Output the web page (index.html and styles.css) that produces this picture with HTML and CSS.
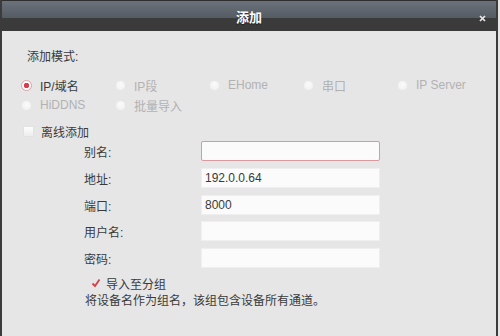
FILE: index.html
```html
<!DOCTYPE html>
<html>
  <head>
    <link rel="stylesheet" href="styles.css">
  </head>
  <body>
    <div class="dialog">
      <div class="title-bar">
        <span class="title">添加</span>
        <span class="close-btn">
          <svg width="7" height="7" viewBox="0 0 7 7">
            <path d="M1 1 L6 6 M6 1 L1 6" stroke="#e8e8e8" stroke-width="1.7" />
          </svg>
        </span>
      </div>

      <div class="dialog-body">
        <div class="section-label">添加模式:</div>

        <div class="mode-grid">
          <label class="mode-option selected"><span class="radio"></span>IP/域名</label>
          <label class="mode-option"><span class="radio"></span>IP段</label>
          <label class="mode-option"><span class="radio"></span>EHome</label>
          <label class="mode-option"><span class="radio"></span>串口</label>
          <label class="mode-option"><span class="radio"></span>IP Server</label>
          <label class="mode-option"><span class="radio"></span>HiDDNS</label>
          <label class="mode-option"><span class="radio"></span>批量导入</label>
        </div>

        <label class="offline-row"><span class="checkbox"></span>离线添加</label>

        <div class="form-grid">
          <div class="field-label">别名:</div>
          <div class="field-input invalid"></div>
          <div class="field-label">地址:</div>
          <div class="field-input">192.0.0.64</div>
          <div class="field-label">端口:</div>
          <div class="field-input">8000</div>
          <div class="field-label">用户名:</div>
          <div class="field-input"></div>
          <div class="field-label">密码:</div>
          <div class="field-input"></div>
        </div>

        <div class="group-row">
          <span class="check-mark">
            <svg width="10" height="10" viewBox="0 0 10 10">
              <path d="M1.5 5.5 L4 8 L8.5 1.5" fill="none" stroke="#d0424f" stroke-width="1.8" />
            </svg>
          </span>
          导入至分组
        </div>
        <div class="group-hint">将设备名作为组名，该组包含设备所有通道。</div>
      </div>
    </div>
  </body>
</html>
```

FILE: styles.css
```css
body {
  margin: 0;
  background: #e6e6e6;
  font-family: "Liberation Sans", "Noto Sans CJK SC", sans-serif;
  font-size: 12px;
  color: #3a3a3a;
}

.dialog {
  width: 494px;
  height: 336px;
  border-left: 2px solid #3b3b3b;
  border-right: 2px solid #3b3b3b;
  background: #e6e6e6;
  box-sizing: content-box;
}

.title-bar {
  position: relative;
  height: 31px;
  display: flex;
  align-items: center;
  justify-content: center;
  border-top: 1px solid #2e2e2e;
  box-sizing: border-box;
  background: linear-gradient(#6c727b 0%, #565c64 55%, #3b3b3b 56%, #3a3a3a 100%);
}

.title {
  color: #fff;
  font-size: 13px;
  font-weight: bold;
  text-shadow: 0 1px 1px rgba(0, 0, 0, 0.5);
}

.close-btn {
  position: absolute;
  right: 10px;
  top: 14px;
  width: 7px;
  height: 7px;
  display: flex;
}

.dialog-body {
  padding: 18px 0 0 19px;
}

.section-label {
  line-height: 16px;
  padding-left: 6px;
  margin-bottom: 10px;
}

.mode-grid {
  display: grid;
  grid-template-columns: repeat(5, 94px);
  grid-auto-rows: 20px;
}

.mode-option {
  display: flex;
  align-items: center;
  gap: 8px;
  color: #b2b2b2;
}

.mode-option.selected {
  color: #3a3a3a;
}

.radio {
  width: 11px;
  height: 11px;
  border-radius: 50%;
  box-sizing: border-box;
  background: radial-gradient(circle at 50% 40%, #fbfbfb 0%, #eeeeee 100%);
  border: 1px solid #e8e8e8;
}

.mode-option.selected .radio {
  border: 1px solid #d9a3a8;
  background: radial-gradient(circle, #d4404d 0, #d4404d 2.4px, #fdfdfd 3px);
}

.offline-row {
  display: flex;
  align-items: center;
  gap: 7px;
  height: 20px;
  margin-top: 6px;
  padding-left: 2px;
}

.checkbox {
  width: 11px;
  height: 11px;
  box-sizing: border-box;
  background: linear-gradient(#fdfdfd, #ededed);
  border: 1px solid #e2e2e2;
}

.form-grid {
  display: grid;
  grid-template-columns: 117px 179px;
  grid-auto-rows: 20px;
  row-gap: 6.75px;
  padding-left: 63px;
}

.field-label {
  display: flex;
  align-items: center;
  padding-top: 1px;
}

.field-input {
  display: flex;
  align-items: center;
  padding-left: 3px;
  background: #fbfbfb;
  border: 1px solid #efefef;
  box-sizing: border-box;
}

.field-input.invalid {
  border: 1px solid #d99a9f;
  border-radius: 2px;
}

.group-row {
  display: flex;
  align-items: center;
  gap: 5px;
  height: 18px;
  margin-top: 6px;
  padding-left: 70px;
}

.check-mark {
  display: flex;
  width: 10px;
  height: 10px;
}

.group-hint {
  line-height: 18px;
  padding-left: 64px;
}
```
